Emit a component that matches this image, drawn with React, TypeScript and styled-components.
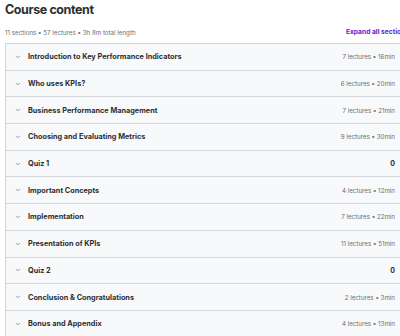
import styled, { createGlobalStyle } from "styled-components";

const GlobalStyle = createGlobalStyle`
  html, body {
    margin: 0;
    padding: 0;
    background: #ffffff;
    overflow: hidden;
  }
  body {
    font-family: Inter, "Liberation Sans", Arial, sans-serif;
    color: #2d2f31;
  }
`;

type Section = {
  title: string;
  meta: string;
  quiz?: boolean;
};

const sections: Section[] = [
  { title: "Introduction to Key Performance Indicators", meta: "7 lectures • 16min" },
  { title: "Who uses KPIs?", meta: "6 lectures • 20min" },
  { title: "Business Performance Management", meta: "7 lectures • 21min" },
  { title: "Choosing and Evaluating Metrics", meta: "9 lectures • 30min" },
  { title: "Quiz 1", meta: "0", quiz: true },
  { title: "Important Concepts", meta: "4 lectures • 12min" },
  { title: "Implementation", meta: "7 lectures • 22min" },
  { title: "Presentation of KPIs", meta: "11 lectures • 51min" },
  { title: "Quiz 2", meta: "0", quiz: true },
  { title: "Conclusion & Congratulations", meta: "2 lectures • 3min" },
  { title: "Bonus and Appendix", meta: "4 lectures • 13min" },
];

const Page = styled.div`
  width: 400px;
  height: 336px;
  padding: 0 0 0 5px;
  box-sizing: border-box;
  overflow: hidden;
`;

const Heading = styled.h2`
  margin: 0;
  padding-top: 1px;
  font-size: 12.5px;
  line-height: 18px;
  font-weight: 700;
  letter-spacing: -0.4px;
  color: #2d2f31;
`;

const SummaryBar = styled.div`
  display: flex;
  align-items: center;
  justify-content: space-between;
  height: 24px;
  padding-top: 2px;
  box-sizing: border-box;
`;

const Summary = styled.span`
  font-size: 6.2px;
  color: #6a6f73;
`;

const ExpandLink = styled.span`
  font-size: 6.7px;
  font-weight: 700;
  color: #5624d0;
  white-space: nowrap;
  margin-right: -9px;
`;

const Panel = styled.div`
  border: 1px solid #d1d7dc;
  border-right: none;
`;

const Row = styled.div`
  display: flex;
  align-items: center;
  height: 26.7px;
  box-sizing: border-box;
  padding: 0 5px 0 9px;
  background: #f7f9fa;
  border-bottom: 1px solid #d1d7dc;
`;

const Chevron = styled.svg`
  width: 6px;
  height: 6px;
  flex: none;
  margin-right: 7px;
`;

const Title = styled.span`
  flex: 1;
  font-size: 7.3px;
  font-weight: 700;
  color: #2d2f31;
`;

const Meta = styled.span<{ $bold?: boolean }>`
  font-size: ${(p) => (p.$bold ? "7px" : "6.2px")};
  font-weight: ${(p) => (p.$bold ? 700 : 400)};
  color: ${(p) => (p.$bold ? "#2d2f31" : "#6a6f73")};
`;

export default function App() {
  return (
    <Page>
      <GlobalStyle />
      <Heading>Course content</Heading>
      <SummaryBar>
        <Summary>11 sections • 57 lectures • 3h 8m total length</Summary>
        <ExpandLink>Expand all sections</ExpandLink>
      </SummaryBar>
      <Panel>
        {sections.map((s) => (
          <Row key={s.title}>
            <Chevron viewBox="0 0 12 12">
              <path d="M3 4.5 L6 7.5 L9 4.5" fill="none" stroke="#6a6f73" strokeWidth="1.4" strokeLinecap="round" strokeLinejoin="round" />
            </Chevron>
            <Title>{s.title}</Title>
            <Meta $bold={s.quiz}>{s.meta}</Meta>
          </Row>
        ))}
      </Panel>
    </Page>
  );
}
